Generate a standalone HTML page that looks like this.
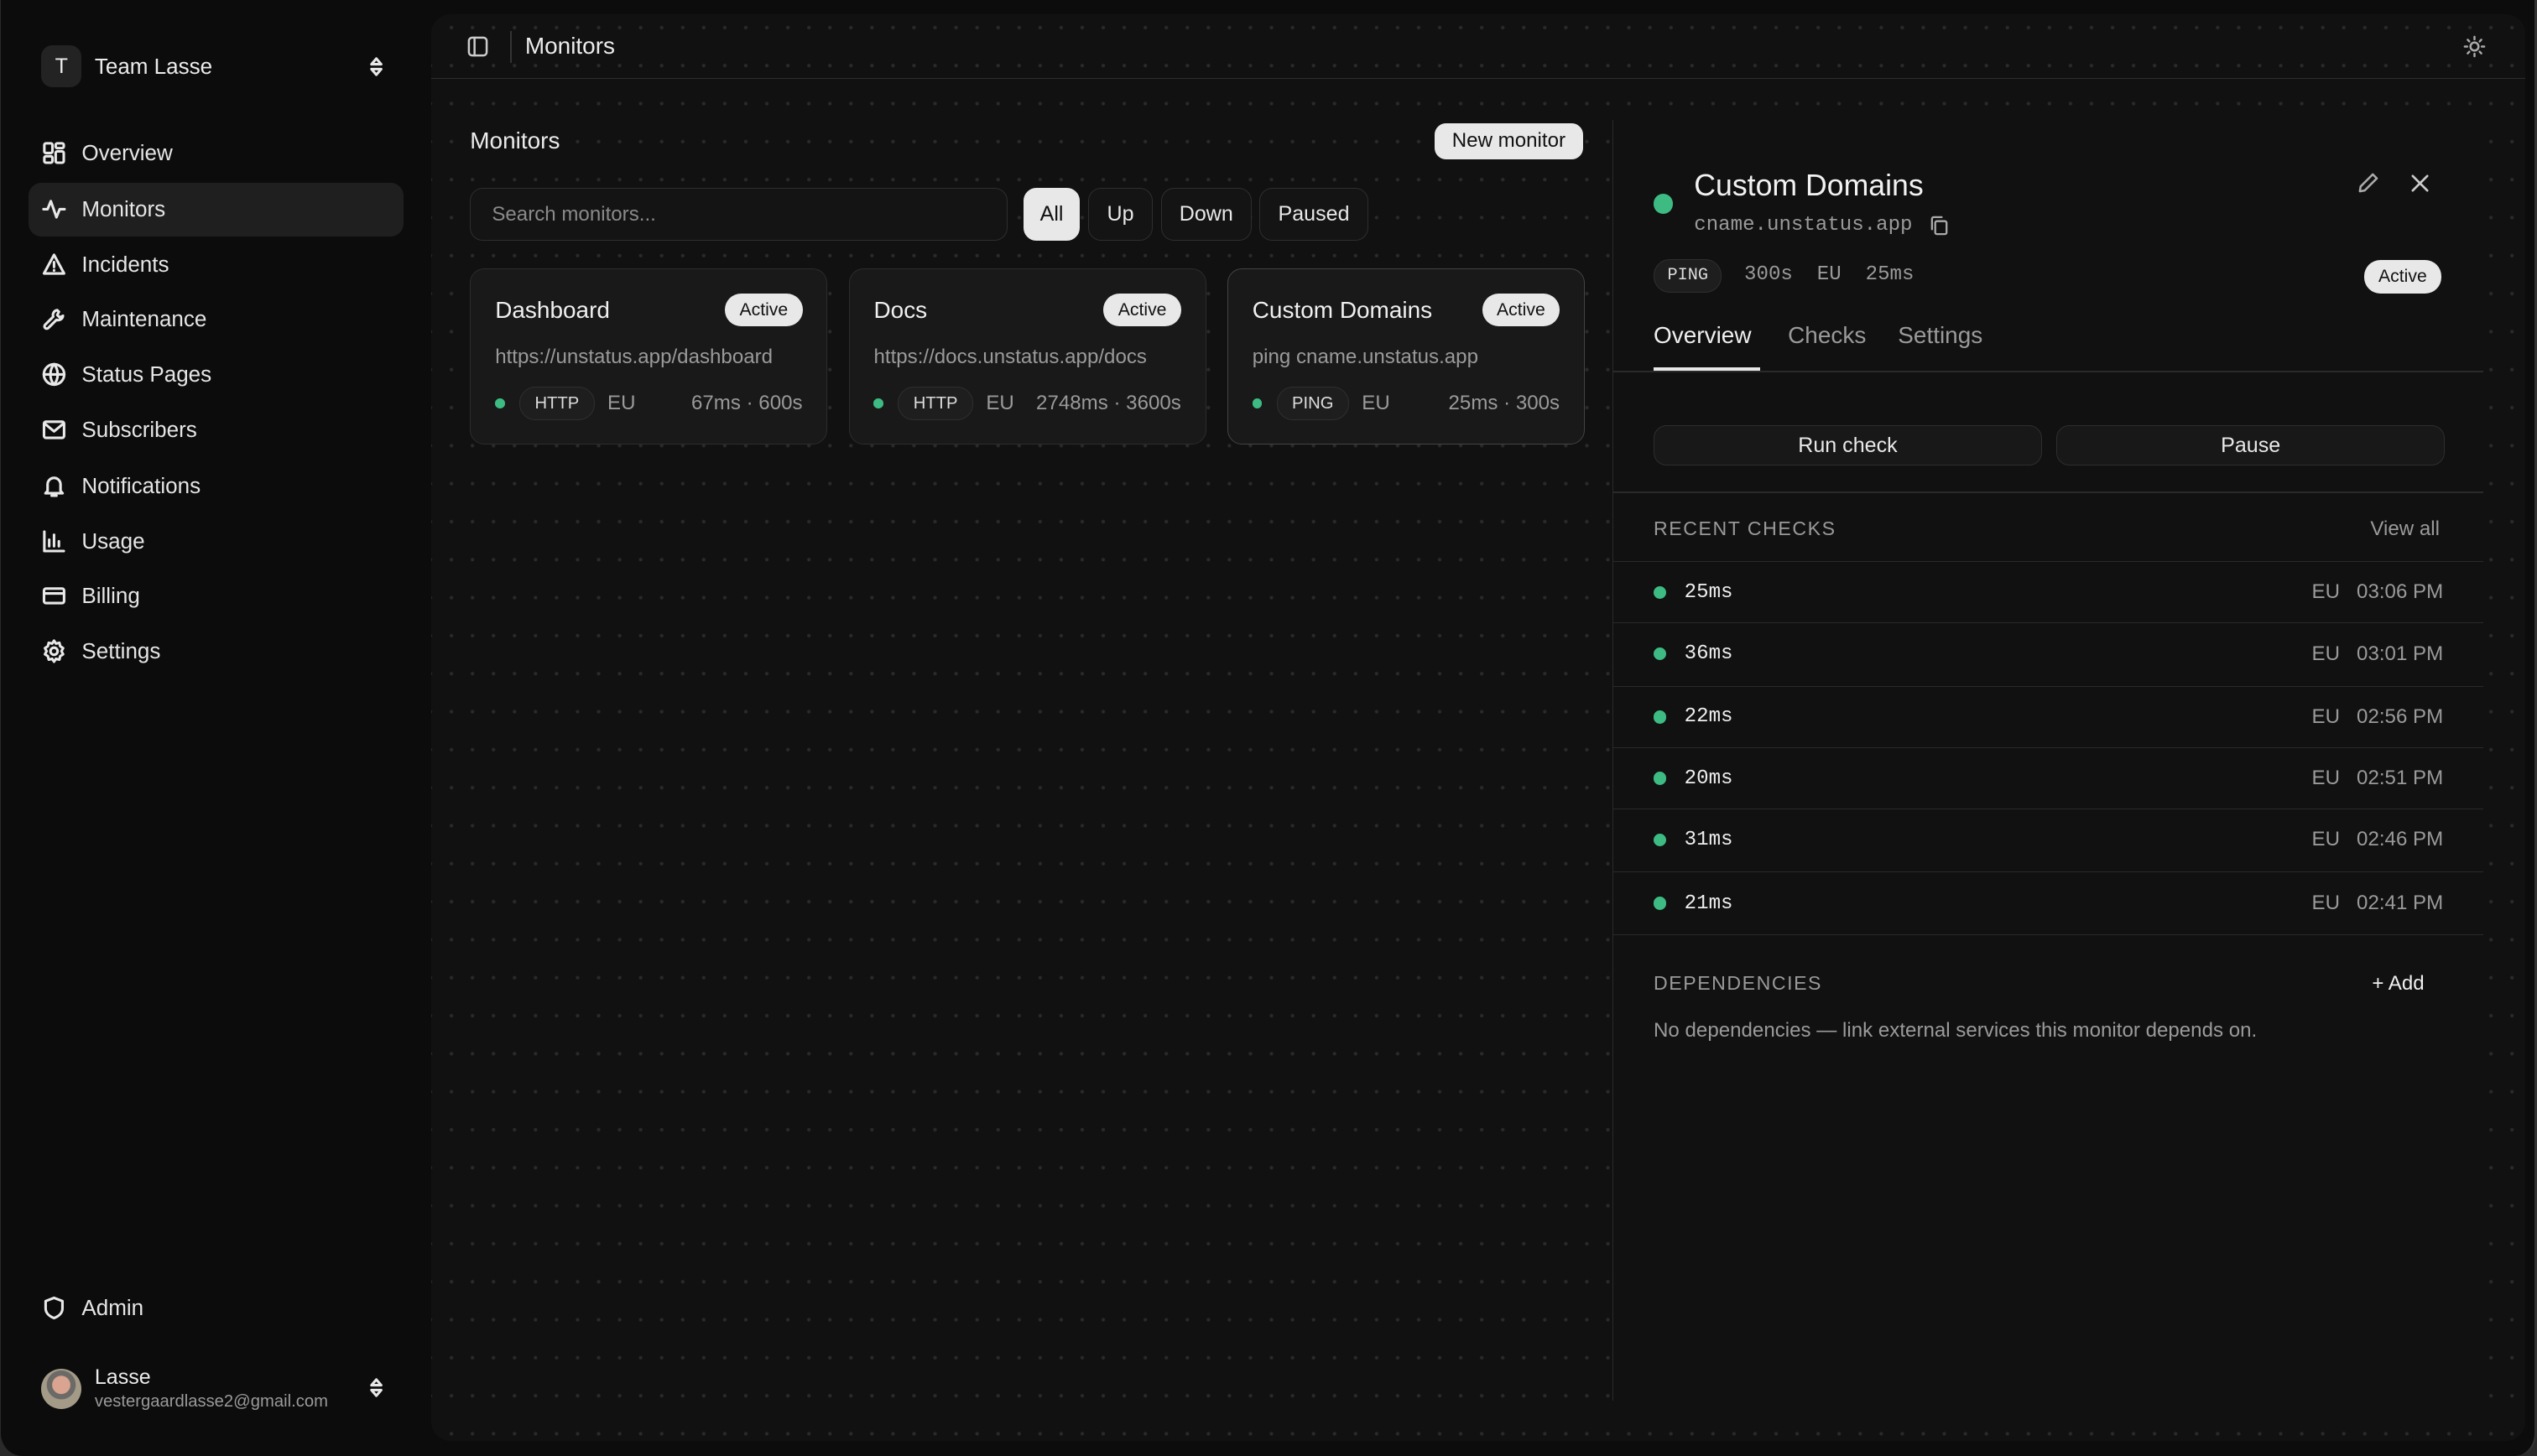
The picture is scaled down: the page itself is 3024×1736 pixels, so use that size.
<!DOCTYPE html>
<html><head><meta charset="utf-8"><style>
*{box-sizing:border-box;margin:0;padding:0}
html,body{width:3024px;height:1736px;overflow:hidden;background:#2a2a2a}
#root{zoom:1.92857;width:1568px;height:900px;position:relative;font-family:"Liberation Sans",sans-serif;color:#ececec;background:#0c0c0c;border-radius:0 0 14px 14px;border-right:2px solid #333;border-left:1px solid #2a2a2a}
.abs{position:absolute}
svg{fill:none;stroke:#e8e8e8;stroke-width:1.6;stroke-linecap:round;stroke-linejoin:round}
.nav{position:absolute;left:17px;width:232px;height:33px;display:flex;align-items:center;font-size:13.5px;color:#e6e6e6}
.nav svg{width:16px;height:16px;margin:0 9px 0 8px}
.main{position:absolute;left:266px;top:9px;width:1294px;height:882px;background-color:#111;border-radius:12px;
background-image:radial-gradient(circle,#2a2a2a 0.9px,transparent 1.3px);background-size:13px 23.5px;background-position:6px 20px;overflow:hidden}
.mono{font-family:"Liberation Mono",monospace}
.card{position:absolute;top:157px;width:221px;height:109px;background:#191919;border:1px solid #2c2c2c;border-radius:9px}
.card .t{position:absolute;left:15px;top:17px;font-size:14.5px;color:#f0f0f0}
.badge{position:absolute;background:#e8e8e8;color:#111;font-size:11px;border-radius:10px;padding:4px 9px}
.card .badge{right:15px;top:15px}
.card .u{position:absolute;left:15px;top:47px;font-size:12.5px;color:#9a9a9a}
.card .r{position:absolute;left:15px;top:73px;right:15px;height:20px;display:flex;align-items:center;font-size:12.5px;color:#9a9a9a}
.dot{width:6px;height:6px;border-radius:50%;background:#3dbb82;display:inline-block}
.pill{border:1px solid #2f2f2f;background:#1e1e1e;border-radius:10px;font-size:10.5px;color:#ddd;padding:4px 9px;margin:0 8px 0 9px}
.fb{position:absolute;top:107px;height:33px;border:1px solid #2e2e2e;background:#141414;border-radius:8px;font-size:13px;color:#e8e8e8;display:flex;align-items:center;justify-content:center}
.row{position:absolute;left:0;width:538px;height:38px;border-top:1px solid #2a2a2a;display:flex;align-items:center;padding:0 25px 0 25px;font-size:12.5px}
.row .dot{width:8px;height:8px;margin-right:11px}
.row .ms{font-family:"Liberation Mono",monospace;color:#eee;font-size:12.5px}
.row .rt{margin-left:auto;color:#9a9a9a}
</style></head><body><div id="root">
<div class="abs" style="left:25px;top:28px;width:25px;height:26px;border-radius:7px;background:#232323;font-size:13px;display:flex;align-items:center;justify-content:center">T</div>
<div class="abs" style="left:58px;top:33px;font-size:13.5px">Team Lasse</div>
<svg class="abs" style="left:226px;top:34px;width:12px;height:14px" viewBox="0 0 12 14"><path d="M3 5.5L6 2l3 3.5zM3 8.5L6 12l3-3.5z"/></svg>
<div class="nav" style="top:78px"><svg viewBox="0 0 16 16"><rect x="2" y="2" width="5" height="6" rx="1"/><rect x="9" y="2" width="5" height="3" rx="1"/><rect x="2" y="10" width="5" height="4" rx="1"/><rect x="9" y="7" width="5" height="7" rx="1"/></svg>Overview</div>
<div class="nav" style="top:113px;background:#1f1f1f;border-radius:8px"><svg viewBox="0 0 16 16"><path d="M1.5 8h2.5l2-5 3.5 10 2-5h3"/></svg>Monitors</div>
<div class="nav" style="top:147px"><svg viewBox="0 0 16 16"><path d="M8 2L1.8 13.5h12.4zM8 6.5v3M8 11.5v.2"/></svg>Incidents</div>
<div class="nav" style="top:181px"><svg viewBox="0 0 16 16"><path d="M10 2.5a3 3 0 0 0-2.5 4L2.5 11.5a1.4 1.4 0 0 0 2 2l5-5a3 3 0 0 0 4-2.5l-2 1-1.5-1.5 1-2z"/></svg>Maintenance</div>
<div class="nav" style="top:215px"><svg viewBox="0 0 16 16"><circle cx="8" cy="8" r="6.3"/><path d="M1.7 8h12.6M8 1.7c-3 3.3-3 9.3 0 12.6M8 1.7c3 3.3 3 9.3 0 12.6"/></svg>Status Pages</div>
<div class="nav" style="top:249px"><svg viewBox="0 0 16 16"><rect x="1.8" y="3" width="12.4" height="10" rx="1.2"/><path d="M2 4l6 5 6-5"/></svg>Subscribers</div>
<div class="nav" style="top:284px"><svg viewBox="0 0 16 16"><path d="M4 11V7a4 4 0 0 1 8 0v4l1.3 1.5H2.7zM6.5 14h3"/></svg>Notifications</div>
<div class="nav" style="top:318px"><svg viewBox="0 0 16 16"><path d="M2 2v12h12M5 11V7M8 11V4M11 11V8"/></svg>Usage</div>
<div class="nav" style="top:352px"><svg viewBox="0 0 16 16"><rect x="1.8" y="3.5" width="12.4" height="9" rx="1.2"/><path d="M2 6.5h12"/></svg>Billing</div>
<div class="nav" style="top:386px"><svg viewBox="0 0 16 16"><circle cx="8" cy="8" r="2.2"/><path d="M8 1.5l1.2 1.8 2.1-.5.5 2.1 1.8 1.2-1 1.9 1 1.9-1.8 1.2-.5 2.1-2.1-.5L8 14.5l-1.2-1.8-2.1.5-.5-2.1-1.8-1.2 1-1.9-1-1.9 1.8-1.2.5-2.1 2.1.5z"/></svg>Settings</div>
<div class="nav" style="top:792px"><svg viewBox="0 0 16 16"><path d="M8 1.8l5.2 2v4.5c0 3-2.5 5-5.2 6-2.7-1-5.2-3-5.2-6V3.8z"/></svg>Admin</div>
<div class="abs" style="left:25px;top:846px;width:25px;height:25px;border-radius:50%;background:radial-gradient(circle at 50% 40%,#d9a490 0 28%,#6c6a66 30% 45%,#a49a88 47%)"></div>
<div class="abs" style="left:58px;top:844px;font-size:13px">Lasse</div>
<div class="abs" style="left:58px;top:861px;font-size:10.5px;color:#9a9a9a">vestergaardlasse2@gmail.com</div>
<svg class="abs" style="left:226px;top:851px;width:12px;height:14px" viewBox="0 0 12 14"><path d="M3 5.5L6 2l3 3.5zM3 8.5L6 12l3-3.5z"/></svg>

<div class="main">
 <svg class="abs" style="left:22px;top:13px;width:14px;height:14px;stroke:#ccc;stroke-width:1.3" viewBox="0 0 14 14"><rect x="1.5" y="1.5" width="11" height="11" rx="2"/><path d="M5 1.5v11"/></svg>
 <div class="abs" style="left:49px;top:10px;width:1px;height:20px;background:#333"></div>
 <div class="abs" style="left:58px;top:11px;font-size:14.5px">Monitors</div>
 <svg class="abs" style="left:1256px;top:13px;width:14px;height:14px;stroke:#aaa;stroke-width:1.3" viewBox="0 0 14 14"><circle cx="7" cy="7" r="2.5"/><path d="M7 1v1.5M7 11.5V13M1 7h1.5M11.5 7H13M2.8 2.8l1 1M10.2 10.2l1 1M2.8 11.2l1-1M10.2 3.8l1-1"/></svg>
 <div class="abs" style="left:0;top:39px;width:1294px;height:1px;background:#2e2e2e"></div>

 <div class="abs" style="left:24px;top:70px;font-size:14.5px">Monitors</div>
 <div class="badge" style="left:620px;top:67px;font-size:12.5px;padding:4px 9px;border-radius:7px;width:92px;text-align:center">New monitor</div>
 <div class="abs" style="left:24px;top:107px;width:332px;height:33px;border:1px solid #2e2e2e;border-radius:8px;background:#141414;font-size:12.5px;color:#8a8a8a;padding:9px 13px">Search monitors...</div>
 <div class="fb" style="left:366px;width:35px;background:#e8e8e8;color:#111;border-color:#e8e8e8">All</div>
 <div class="fb" style="left:406px;width:40px">Up</div>
 <div class="fb" style="left:451px;width:56px">Down</div>
 <div class="fb" style="left:512px;width:67px">Paused</div>

 <div class="card" style="left:24px"><div class="t">Dashboard</div><div class="badge">Active</div><div class="u">https://unstatus.app/dashboard</div><div class="r"><span class="dot"></span><span class="pill">HTTP</span>EU<span style="margin-left:auto">67ms · 600s</span></div></div>
 <div class="card" style="left:258px"><div class="t">Docs</div><div class="badge">Active</div><div class="u">https://docs.unstatus.app/docs</div><div class="r"><span class="dot"></span><span class="pill">HTTP</span>EU<span style="margin-left:auto">2748ms · 3600s</span></div></div>
 <div class="card" style="left:492px;border-color:#444"><div class="t">Custom Domains</div><div class="badge">Active</div><div class="u">ping cname.unstatus.app</div><div class="r"><span class="dot"></span><span class="pill">PING</span>EU<span style="margin-left:auto">25ms · 300s</span></div></div>

 <div class="abs" style="left:730px;top:65px;width:538px;height:792px;background:#111;border-left:1px solid #2a2a2a">
  <span class="dot abs" style="left:25px;top:46px;width:12px;height:12px"></span>
  <div class="abs" style="left:50px;top:30px;font-size:18.5px;color:#f2f2f2">Custom Domains</div>
  <div class="abs mono" style="left:50px;top:58px;font-size:12.5px;color:#9a9a9a">cname.unstatus.app</div>
  <svg class="abs" style="left:195px;top:59px;width:13px;height:13px;stroke:#aaa;stroke-width:1.2" viewBox="0 0 13 13"><rect x="4" y="4" width="7" height="8" rx="1"/><path d="M2 9V2.5A1 1 0 0 1 3 1.5h5"/></svg>
  <svg class="abs" style="left:459px;top:32px;width:15px;height:15px;stroke:#aaa;stroke-width:1.3" viewBox="0 0 15 15"><path d="M10.5 2l2.5 2.5-7.5 7.5-3 .5.5-3z"/></svg>
  <svg class="abs" style="left:492px;top:33px;width:13px;height:13px;stroke:#ccc;stroke-width:1.4" viewBox="0 0 13 13"><path d="M2 2l9 9M11 2l-9 9"/></svg>
  <span class="pill abs mono" style="left:25px;top:86px;margin:0;font-size:10.5px;padding:4px 8px">PING</span>
  <div class="abs mono" style="left:81px;top:89px;font-size:12.5px;color:#9a9a9a">300s&nbsp;&nbsp;EU&nbsp;&nbsp;25ms</div>
  <div class="badge" style="left:464px;top:87px">Active</div>
  <div class="abs" style="left:25px;top:125px;font-size:14.5px;color:#f0f0f0">Overview</div>
  <div class="abs" style="left:108px;top:125px;font-size:14.5px;color:#9a9a9a">Checks</div>
  <div class="abs" style="left:176px;top:125px;font-size:14.5px;color:#9a9a9a">Settings</div>
  <div class="abs" style="left:25px;top:153px;width:66px;height:3px;background:#e8e8e8"></div>
  <div class="abs" style="left:0;top:155px;width:538px;height:1px;background:#2a2a2a"></div>
  <div class="fb" style="left:25px;top:189px;width:240px;height:25px;background:#181818">Run check</div>
  <div class="fb" style="left:274px;top:189px;width:240px;height:25px;background:#181818">Pause</div>
  <div class="abs" style="left:0;top:230px;width:538px;height:1px;background:#2a2a2a"></div>
  <div class="abs" style="left:25px;top:246px;font-size:12px;color:#9a9a9a;letter-spacing:.8px">RECENT CHECKS</div>
  <div class="abs" style="left:468px;top:246px;font-size:12.5px;color:#9a9a9a">View all</div>
  <div class="row" style="top:273px"><span class="dot"></span><span class="ms">25ms</span><span class="rt">EU&nbsp;&nbsp;&nbsp;03:06 PM</span></div>
  <div class="row" style="top:311px"><span class="dot"></span><span class="ms">36ms</span><span class="rt">EU&nbsp;&nbsp;&nbsp;03:01 PM</span></div>
  <div class="row" style="top:350px"><span class="dot"></span><span class="ms">22ms</span><span class="rt">EU&nbsp;&nbsp;&nbsp;02:56 PM</span></div>
  <div class="row" style="top:388px"><span class="dot"></span><span class="ms">20ms</span><span class="rt">EU&nbsp;&nbsp;&nbsp;02:51 PM</span></div>
  <div class="row" style="top:426px"><span class="dot"></span><span class="ms">31ms</span><span class="rt">EU&nbsp;&nbsp;&nbsp;02:46 PM</span></div>
  <div class="row" style="top:465px;border-bottom:1px solid #2a2a2a;height:39px"><span class="dot"></span><span class="ms">21ms</span><span class="rt">EU&nbsp;&nbsp;&nbsp;02:41 PM</span></div>
  <div class="abs" style="left:25px;top:527px;font-size:12px;color:#9a9a9a;letter-spacing:.8px">DEPENDENCIES</div>
  <div class="abs" style="left:469px;top:527px;font-size:12.5px;color:#f0f0f0">+ Add</div>
  <div class="abs" style="left:25px;top:556px;font-size:12.5px;color:#9a9a9a">No dependencies — link external services this monitor depends on.</div>
 </div>
</div>
</div></body></html>
